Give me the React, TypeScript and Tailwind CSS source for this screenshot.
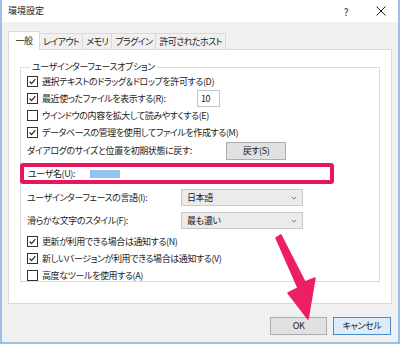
import React from "react";

const Check = ({ checked }: { checked?: boolean }) => (
  <span className="flex h-[11px] w-[11px] shrink-0 items-center justify-center border border-[#333] bg-white">
    {checked && (
      <svg viewBox="0 0 11 11" className="h-[11px] w-[11px]">
        <path d="M2 5.5 L4.3 8 L9 2.5" fill="none" stroke="#222" strokeWidth="1.4" />
      </svg>
    )}
  </span>
);

const CheckRow = ({ label, checked }: { label: string; checked?: boolean }) => (
  <div className="flex h-[17px] items-center gap-[4px]">
    <Check checked={checked} />
    <span>{label}</span>
  </div>
);

const Select = ({ value }: { value: string }) => (
  <div className="flex h-[17px] w-[122px] items-center justify-between border border-[#c9c9c9] bg-[#ebebeb] pl-[5px] pr-[5px]">
    <span>{value}</span>
    <svg viewBox="0 0 8 5" className="h-[4px] w-[6px]">
      <path d="M1 1 L4 4 L7 1" fill="none" stroke="#555" strokeWidth="1" />
    </svg>
  </div>
);

const tabs = ["一般", "レイアウト", "メモリ", "プラグイン", "許可されたホスト"];

export default function App() {
  return (
    <div className="relative flex h-[344px] w-[400px] flex-col overflow-hidden border-x-2 border-b-2 border-[#9cc1e2] bg-[#f0f0f0] font-['Noto_Sans_CJK_JP',sans-serif] text-[9px] tracking-[-0.4px] text-[#1b1b1b] [font-feature-settings:'palt']">
      {/* Title bar */}
      <div className="flex h-[22px] shrink-0 items-center bg-white pl-[6px]">
        <span className="text-[9px] tracking-normal">環境設定</span>
        <div className="ml-auto flex items-center gap-[28px] pr-[12px]">
          <span className="text-[10px]">?</span>
          <svg viewBox="0 0 10 10" className="h-[10px] w-[10px]">
            <path d="M0.5 0.5 L9.5 9.5 M9.5 0.5 L0.5 9.5" stroke="#222" strokeWidth="1" />
          </svg>
        </div>
      </div>

      <div className="flex flex-1 flex-col px-[6px] pt-[9px]">
        {/* Tabs */}
        <div className="flex h-[18px] items-end tracking-[-0.6px]">
          {tabs.map((t, i) => (
            <div
              key={t}
              className={
                i === 0
                  ? "relative z-10 -mb-px flex h-[19px] w-[32px] items-center justify-center border border-b-0 border-[#d9d9d9] bg-white"
                  : "-ml-px flex h-[16px] items-center border border-b-0 border-[#d9d9d9] bg-[#f0f0f0] px-[3px]"
              }
            >
              {t}
            </div>
          ))}
        </div>

        {/* Panel */}
        <div className="h-[255px] border border-[#d9d9d9] bg-white pl-[11px] pt-[11px]">
          <fieldset className="h-[221px] w-[360px] border border-[#dcdcdc] px-[6px]">
            <legend className="ml-[3px] px-[2px] leading-[12px]">ユーザインターフェースオプション</legend>
            <CheckRow checked label="選択テキストのドラッグ＆ドロップを許可する(D)" />
            <div className="flex h-[17px] items-center">
              <div className="flex w-[170px] items-center gap-[4px]">
                <Check checked />
                <span>最近使ったファイルを表示する(R):</span>
              </div>
              <div className="flex h-[17px] w-[23px] items-center border border-[#c4c4c4] pl-[3px]">10</div>
            </div>
            <CheckRow label="ウインドウの内容を拡大して読みやすくする(E)" />
            <CheckRow checked label="データベースの管理を使用してファイルを作成する(M)" />
            <div className="flex h-[20px] items-center">
              <span className="w-[199px]">ダイアログのサイズと位置を初期状態に戻す:</span>
              <div className="flex h-[18px] w-[60px] items-center justify-center border border-[#adadad] bg-[#e1e1e1]">戻す(S)</div>
            </div>
            <div className="-ml-[7px] mt-[2px] flex h-[21px] w-[314px] items-center rounded-[3px] border-[4px] border-[#e8175d] bg-white pl-[4px]">
              <span className="w-[62px]">ユーザ名(U):</span>
              <span className="h-[8px] w-[30px] bg-[#93c4ee]" />
            </div>
            <div className="mt-[5px] flex h-[17px] items-center">
              <span className="w-[154px]">ユーザインターフェースの言語(I):</span>
              <Select value="日本語" />
            </div>
            <div className="mt-[6px] flex h-[17px] items-center">
              <span className="w-[154px]">滑らかな文字のスタイル(F):</span>
              <Select value="最も濃い" />
            </div>
            <div className="mt-[4px]">
              <CheckRow checked label="更新が利用できる場合は通知する(N)" />
              <CheckRow checked label="新しいバージョンが利用できる場合は通知する(V)" />
              <CheckRow label="高度なツールを使用する(A)" />
            </div>
          </fieldset>
        </div>

        {/* Buttons */}
        <div className="mt-[13px] flex justify-end gap-[6px] pr-[1px]">
          <div className="flex h-[18px] w-[57px] items-center justify-center border border-[#adadad] bg-[#e1e1e1]">OK</div>
          <div className="flex h-[18px] w-[58px] items-center justify-center border border-[#4a8ccb] bg-[#dcecfa]">キャンセル</div>
        </div>
      </div>

      {/* Pink arrow overlay */}
      <svg className="pointer-events-none absolute left-0 top-0" width="400" height="344" viewBox="0 0 400 344">
        <polygon
          points="274,238 279,235 303,282 313,278 306,319 286,293 296,288"
          fill="#ec1f62"
          stroke="#ec1f62"
          strokeLinejoin="round"
          strokeWidth="1.5"
        />
      </svg>
    </div>
  );
}
